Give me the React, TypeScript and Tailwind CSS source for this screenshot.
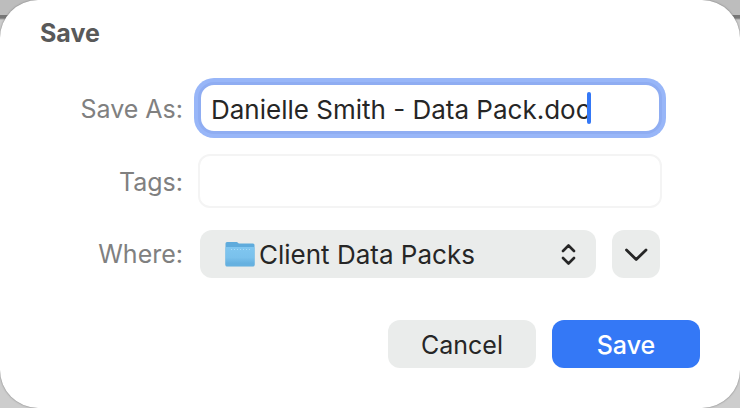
import { useState } from 'react'

const folders = ['Client Data Packs']

function FolderIcon() {
  return (
    <svg viewBox="0 0 30 26" className="h-[26px] w-[30px]" aria-hidden="true">
      <defs>
        <linearGradient id="folder-front" x1="0" y1="0" x2="0" y2="1">
          <stop offset="0" stopColor="#80c6f0" />
          <stop offset="0.55" stopColor="#7ac1ec" />
          <stop offset="0.85" stopColor="#66b1e0" />
        </linearGradient>
      </defs>
      <path d="M2 1h9c1 0 1.500 .3 2.200 1l.6 .6H28a1.500 1.500 0 0 1 1.500 1.500V24a1.500 1.500 0 0 1-1.500 1.500H2A1.500 1.500 0 0 1 .5 24V2.500A1.500 1.500 0 0 1 2 1z" fill="#5fabdc" />
      <path d="M.5 7a1 1 0 0 1 1-1h27a1 1 0 0 1 1 1V23.500a1.500 1.500 0 0 1-1.500 1.500H2A1.500 1.500 0 0 1 .5 23.500z" fill="url(#folder-front)" />
      <path d="M6 8.500h20" stroke="#a9daf6" strokeDasharray="1 2" />
    </svg>
  )
}

export default function App() {
  const [name, setName] = useState('Danielle Smith - Data Pack.doc')
  const [tags, setTags] = useState('')

  return (
    <main className="flex min-h-screen bg-[linear-gradient(#bdbdbd_15px,#777777_15px,#777777_18px,#cdcdcd_20px)] font-['Inter',sans-serif] text-[25px] leading-8 text-[#262626]">
      <form className="w-full rounded-[38px] bg-white px-10 pt-[17px] pb-10 shadow-[0_0_2px_#707070]" onSubmit={(e) => e.preventDefault()}>
        <h1 className="font-bold text-[#595959]">Save</h1>

        <div className="mt-[33px] mr-10 grid grid-cols-[143px_1fr] items-center gap-x-[17px]">
          <label htmlFor="name" className="pt-0.5 text-right text-[#808080]">Save As:</label>
          <div className="relative -mx-0.5">
            <input
              id="name"
              value={name}
              onChange={(e) => setName(e.target.value)}
              className="block h-[52px] w-full rounded-2xl border-3 border-[#8fadf2] bg-white px-2.5 pt-0.5 text-[26px] caret-transparent ring-4 ring-[#98b6f8] outline-none"
            />
            {/* Insertion point */}
            <span className="absolute top-2.5 left-[389px] h-8 w-1 rounded-full bg-[#3478f6]" />
          </div>

          <label htmlFor="tags" className="mt-5 pt-0.5 text-right text-[#808080]">Tags:</label>
          <input
            id="tags"
            value={tags}
            onChange={(e) => setTags(e.target.value)}
            className="-mx-0.5 mt-5 h-[54px] rounded-xl border-2 border-[#f4f4f4] bg-white px-3 outline-none"
          />

          <label htmlFor="where" className="mt-[22px] text-right text-[#808080]">Where:</label>
          <div className="mt-[22px] flex gap-4">
            <div className="relative min-w-0 flex-1">
              <select id="where" className="h-12 w-full appearance-none rounded-xl bg-[#eaeceb] pt-0.5 pr-12 pl-[59px] text-[26px] outline-none">
                {folders.map((folder) => (
                  <option key={folder}>{folder}</option>
                ))}
              </select>
              <span className="pointer-events-none absolute inset-y-0 left-[25px] flex items-center">
                <FolderIcon />
              </span>
              <svg viewBox="0 0 16 24" className="pointer-events-none absolute top-3 right-5 h-6 w-4" fill="none" stroke="#262626" strokeWidth="2.600" strokeLinecap="round" strokeLinejoin="round">
                <path d="M3 9 8.500 3.500 14 9M3 16l5.500 5.500L14 16" />
              </svg>
            </div>
            <button type="button" aria-label="Show more options" className="flex size-12 items-center justify-center rounded-xl bg-[#eaeceb]">
              <svg viewBox="0 0 24 14" className="h-3.5 w-6" fill="none" stroke="#262626" strokeWidth="2.800" strokeLinecap="round" strokeLinejoin="round">
                <path d="M2.500 3l9.700 9.500L22 3" />
              </svg>
            </button>
          </div>
        </div>

        <div className="mt-[42px] flex justify-end gap-4">
          <button type="button" className="h-12 w-[148px] rounded-xl bg-[#eaeceb] pt-0.5">Cancel</button>
          <button type="submit" className="h-12 w-[148px] rounded-xl bg-[#3478f6] pt-0.5 font-medium text-white">Save</button>
        </div>
      </form>
    </main>
  )
}
